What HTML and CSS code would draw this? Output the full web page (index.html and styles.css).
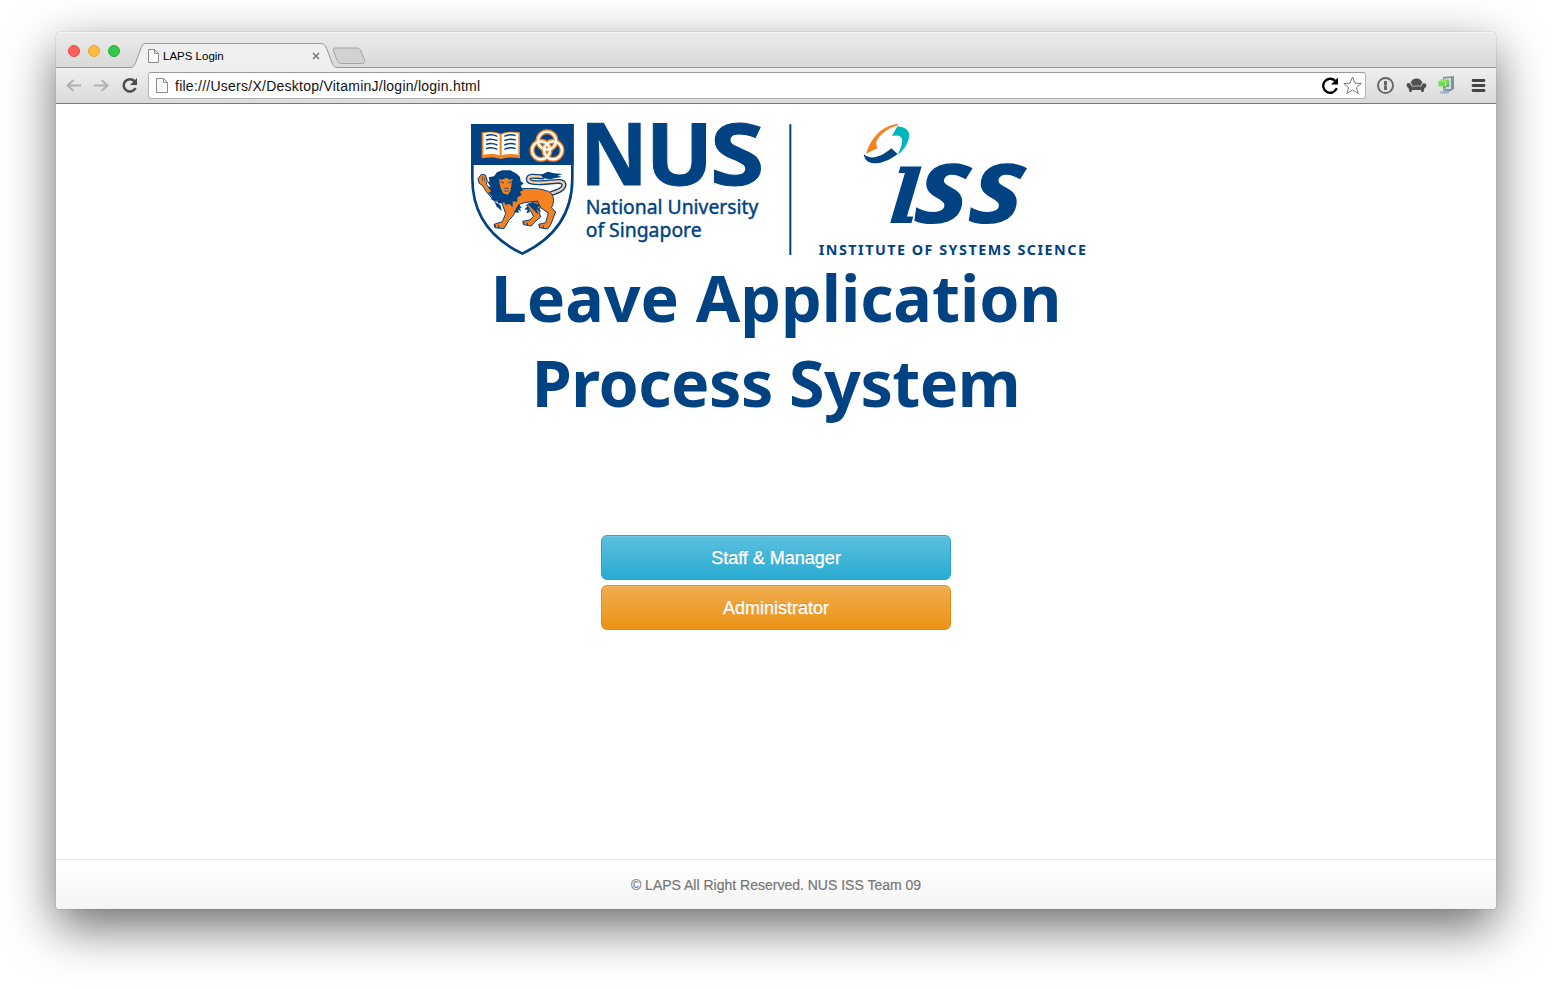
FILE: index.html
```html
<!DOCTYPE html>
<html lang="en">
<head>
<meta charset="utf-8">
<title>LAPS Login</title>
<link rel="stylesheet" href="styles.css">
</head>
<body>
<div class="window">
  <header class="tabstrip">
    <div class="lights"><i class="light red"></i><i class="light yellow"></i><i class="light green"></i></div>
    <div class="tab">
      <svg class="tab-shape" width="208" height="26" viewBox="0 0 208 26"><path d="M0 24.500C4 24.500 4.500 22 6 18.500L11 5C12.500 1.500 13.500.5 16 .5H191C194 .5 195 2 196.500 5L202 20C203.500 23.500 204.500 24.500 208 24.500V26H0Z" fill="#efefef"/><path d="M0 24.500C4 24.500 4.500 22 6 18.500L11 5C12.500 1.500 13.500.5 16 .5H191C194 .5 195 2 196.500 5L202 20C203.500 23.500 204.500 24.500 208 24.500" fill="none" stroke="#999"/></svg>
      <svg class="page-icon" width="11" height="14" viewBox="0 0 11 14"><path d="M.5.5H6.500L10.500 4.500V13.500H.5ZM6.500.5V4.500H10.500" fill="#fff" stroke="#8b8b8b"/></svg>
      <span class="tab-title">LAPS Login</span>
      <svg class="tab-close" width="8" height="8" viewBox="0 0 8 8"><path d="M1 1L7 7M7 1L1 7" stroke="#777" stroke-width="1.500"/></svg>
    </div>
    <svg class="new-tab" width="34" height="18" viewBox="0 0 34 18"><path d="M3 1H25C27 1 28 2 29 4L32.500 13C33 15.500 32.500 16.500 30 16.500H10C7 16.500 6 15.500 5 13L1.500 4C1 2 1 1 3 1Z" fill="#d2d2d2" stroke="#a4a4a4"/></svg>
  </header>
  <div class="toolbar">
    <svg class="nav-icons" width="76" height="20" viewBox="0 0 76 20"><g fill="none" stroke="#b1b1b1" stroke-width="2"><path d="M18 9.500H5M10.500 4L4.500 9.500L10.500 15M31 9.500H44M38.500 4L44.500 9.500L38.500 15"/></g><path d="M71.500 5.200A6.200 6.200 0 1 0 72.500 12" fill="none" stroke="#4c4c4c" stroke-width="2.500"/><path d="M74 2V9H67Z" fill="#4c4c4c"/></svg>
    <div class="address">
      <svg class="page-icon" width="12" height="15" viewBox="0 0 12 15"><path d="M.5.5H7.500L11.500 4.500V14.500H.5ZM7.500.5V4.500H11.500" fill="#f8f8f8" stroke="#8b8b8b"/></svg>
      <span class="url">file:///Users/X/Desktop/VitaminJ/login/login.html</span>
      <svg class="address-icons" width="42" height="20" viewBox="0 0 42 20"><path d="M13.200 4.800A7 7 0 1 0 14.800 12.200" fill="none" stroke="#000" stroke-width="2.300"/><path d="M16 1.500V8.500H9Z"/><path d="M30.500 1L33 7.200L39.300 7.500L34.500 11.500L36.300 17.500L30.500 14L24.800 17.500L26.500 11.500L21.800 7.500L28 7.200Z" fill="#fff" stroke="#777"/></svg>
    </div>
    <svg class="extensions" width="112" height="22" viewBox="0 0 112 22">
      <circle cx="10.500" cy="10.500" r="7.500" fill="#e4e4e4" stroke="#666" stroke-width="1.900"/>
      <path d="M9 6H12V9.500L11.300 10.500L12 11.500V15H9V11.500L9.700 10.500L9 9.500Z" fill="#666"/>
      <g fill="#505050"><path d="M35.500 8C36.500 4.800 39 3.500 41.500 3.500S46.500 4.800 47.500 8L46 11H37Z"/><path d="M32 8.500C34 7.500 36 8.500 36.200 11C39 10 44 10 46.800 11C47 8.500 49 7.500 51 9C52 11 51 12.500 49.500 13L48.500 17H46.500L46 15H37L36.500 17H34.500L33.500 13C32 12.500 31 10.500 32 8.500Z"/></g>
      <path d="M36 8L37.500 11.500Q41.500 10 45.500 11.500L47 8" fill="none" stroke="#c8c8c8" stroke-width=".8"/>
      <path d="M68 2L79 1V14L75 16.500H68Z" fill="#80949b"/><path d="M69 4.500L75 4V13H71" fill="none" stroke="#d3dee1" stroke-width="1.800"/>
      <path d="M63.500 6L66 4.500H73.500V9.500L70.500 11.500H63.500Z" fill="#70dc50"/><path d="M63.500 6H70.500V11.500" fill="none" stroke="#b1f49c"/>
      <path d="M69.500 13V19M65 17.500H74" stroke="#9ab6c5" stroke-width="2"/>
      <path d="M98 5.500H109M98 10.500H109M98 15.500H109" stroke="#444" stroke-width="2.800" stroke-linecap="round"/>
    </svg>
  </div>
  <main class="page">
    <svg class="logo" width="640" height="145" viewBox="0 0 1920 435" role="img" aria-label="National University of Singapore, Institute of Systems Science">
      <g>
        <path d="M37 31H337V190C337 294 286 369 187 416C88 369 37 294 37 190Z" fill="#fff" stroke="#004282" stroke-width="8"/>
        <path d="M33 27H341V150H33Z" fill="#004282"/>
        <path d="M65 52C86 49 107 49 122 56C138 49 159 49 180 52V130C159 126 138 126 122 132C107 126 86 126 65 130Z" fill="#f5821f"/>
        <path d="M70 54C90 51 107 52 119 59V121C105 116 87 116 70 119ZM125 59C138 52 155 51 175 54V119C158 116 140 116 125 121Z" fill="#fff"/>
        <path d="M78 62Q95 56 112 64M78 75Q95 69 112 77M78 88Q95 82 112 90M78 101Q95 95 112 103M133 64Q150 56 167 62M133 77Q150 69 167 75M133 90Q150 82 167 88M133 103Q150 95 167 101" fill="none" stroke="#004282" stroke-width="4.500"/>
        <g fill="none" stroke="#f5821f" stroke-width="15"><circle cx="261" cy="77" r="27"/><circle cx="243" cy="106" r="27"/><circle cx="279" cy="106" r="27"/></g>
        <g fill="none" stroke="#fff" stroke-width="7"><circle cx="261" cy="77" r="27"/><circle cx="243" cy="106" r="27"/><circle cx="279" cy="106" r="27"/></g>
        <path d="M272 236C297 229 313 221 312 208C309 193 281 201 247 203C219 204 203 202 205 191C207 180 226 184 252 186" fill="none" stroke="#004282" stroke-width="15"/>
        <path d="M272 236C297 229 313 221 312 208C309 193 281 201 247 203C219 204 203 202 205 191C207 180 226 184 252 186" fill="none" stroke="#f9cfa5" stroke-width="7"/>
        <path d="M242 180L263 170L282 175L307 177L293 182L306 186L286 189L270 193L250 190Z" fill="#004282"/>
        <g fill="#f5821f" stroke="#004282" stroke-width="3" stroke-linejoin="round">
          <path d="M200 270L223 260L245 262L237 289L242 306L224 321L214 333L191 329L188 319L210 315L220 304L214 291Z"/>
          <path d="M176 222C207 219 246 218 272 233C284 247 282 266 274 278L287 290L272 329L263 342L239 338L236 328L257 323L265 294L243 279L232 258L194 263L178 268L158 304L147 315L132 341L105 338L102 328L127 320L137 296L126 264L105 257C89 244 74 225 69 213L57 204L54 191L64 178L76 180L82 196L79 208L102 236L118 249L149 246Z"/>
        </g>
        <path d="M111 172L127 166L151 166L170 176L180 186L182 199L191 205L182 213L190 225L180 230L185 241L173 246L171 261L158 259L158 277L149 267L136 269L133 262L115 266L113 256L103 259L96 244L85 233L94 228L84 218L91 214L83 202L89 198L86 187L102 184Z" fill="#004282"/>
        <path d="M118 192L127 194L138 188L150 194L159 191L155 200L154 213L151 229L143 239L129 235L122 219L118 202Z" fill="#f5821f"/>
        <path d="M122 200L132 204M144 204L154 200M133 220H146M133 227Q139 231 146 227" fill="none" stroke="#004282" stroke-width="2.500"/>
        <path d="M67 184V197M74 187V199M93 252L100 246L110 274L124 286L120 270M176 268L184 279L177 278L182 287L172 282L176 292L162 291M203 268L220 264L240 271L232 276L242 290L229 280L233 297M204 274L195 283L205 283L200 293L210 290" fill="#004282" stroke="#004282" stroke-width="2"/>
        <path d="M106 330V338M116 330V339M192 322V329M202 323V332M239 331V338M250 332V340" stroke="#004282" stroke-width="3"/>
      </g>
      <g transform="translate(360)" class="logo-text">
        <text class="nus" y="210" font-size="257" font-weight="700"><tspan x="1" textLength="202" lengthAdjust="spacingAndGlyphs">N</tspan><tspan x="197" textLength="202" lengthAdjust="spacingAndGlyphs">U</tspan><tspan x="390" textLength="163" lengthAdjust="spacingAndGlyphs">S</tspan></text>
        <text x="17" y="296" font-size="57" font-weight="400" textLength="518" lengthAdjust="spacingAndGlyphs" class="name">National University</text>
        <text x="17" y="365" font-size="57" font-weight="400" textLength="348" lengthAdjust="spacingAndGlyphs" class="name">of Singapore</text>
        <path d="M631 28V420" stroke="#004282" stroke-width="6"/>
      </g>
      <g transform="translate(1050)" class="logo-text">
        <path d="M264 27C224 31 187 58 168 116L202 100L198 83C208 57 236 39 264 31Z" fill="#f5821f"/>
        <path d="M262 34C291 36 302 51 296 72C290 93 279 107 264 119C272 98 279 83 275 70C270 60 259 61 246 63Z" fill="#00b5bd"/>
        <path d="M161 117C178 133 207 132 244 100L263 117C224 148 167 160 161 117Z"/>
        <g transform="translate(0 325) skewX(-8)">
          <text x="226" y="0" class="serif-letter" font-size="326" font-weight="700" textLength="98" lengthAdjust="spacingAndGlyphs">ı</text>
          <text x="308" y="-2" font-size="322" font-weight="700" font-style="italic" textLength="327" lengthAdjust="spacingAndGlyphs">ss</text>
        </g>
        <text x="26" y="420" font-size="43" font-weight="700" textLength="802">INSTITUTE OF SYSTEMS SCIENCE</text>
      </g>
    </svg>
    <h1 class="heading"><span class="line-one">Leave Application</span><span class="line-two">Process System</span></h1>
    <nav class="actions"><a class="button info">Staff &amp; Manager</a><a class="button warning">Administrator</a></nav>
    <footer class="footer"><span>© LAPS All Right Reserved. NUS ISS Team 09</span></footer>
  </main>
</div>
</body>
</html>
```

FILE: styles.css
```css
* { box-sizing: border-box; }
body { margin: 0; padding: 32px 56px 80px; height: 989px; overflow: hidden; background: #fff; font-family: "Liberation Sans", Arial, sans-serif; }
svg { display: block; flex: none; }
.window { height: 877px; display: flex; flex-direction: column; border-radius: 5px 5px 4px 4px; overflow: hidden; box-shadow: 0 0 1px rgba(0,0,0,.6), 0 18px 50px rgba(0,0,0,.58); }
.tabstrip { height: 36px; flex: none; display: flex; background: linear-gradient(#ececec, #d9d9d9); border-bottom: 1px solid #999; box-shadow: inset 0 1px #f5f5f5; }
.lights { display: flex; gap: 8px; padding: 13px 0 0 12px; width: 74px; }
.light { width: 12px; height: 12px; border-radius: 50%; border: 1px solid; }
.red { background: #fc605b; border-color: #e44e4a; }
.yellow { background: #fdbc40; border-color: #e1a236; }
.green { background: #34c84a; border-color: #2bac3a; }
.tab { position: relative; width: 208px; height: 26px; margin-top: 11px; display: flex; align-items: center; padding-left: 18px; padding-right: 18px; }
.tab-shape { position: absolute; left: 0; top: 0; }
.tab .page-icon, .tab-title, .tab-close { position: relative; }
.tab-title { font-size: 11.500px; margin-left: 4px; flex: 1; white-space: nowrap; }
.new-tab { margin: 15px 0 0 -6px; }
.toolbar { height: 36px; flex: none; display: flex; align-items: center; background: linear-gradient(#efefef, #dadada); border-bottom: 1px solid #777; padding-left: 7px; }
.nav-icons { width: 76px; overflow: visible; }
.address { width: 1218px; height: 27px; margin-left: 9px; display: flex; align-items: center; padding-left: 7px; background: #fff; border: 1px solid #b5b5b5; border-top-color: #999; border-radius: 3px; }
.url { margin-left: 7px; flex: 1; font-size: 14px; letter-spacing: .25px; color: #111; }
.address-icons { margin-right: 1px; }
.extensions { margin-left: 9px; }
.page { flex: 1; display: flex; flex-direction: column; align-items: center; background: #fff; padding-top: 11px; }
.logo { margin-left: 8px; overflow: visible; }
.logo-text { fill: #004282; font-family: "Noto Sans", "Open Sans", sans-serif; }
.nus { stroke: #004282; stroke-width: 3; }
.name { stroke: #004282; stroke-width: 1.200; }
.serif-letter { font-family: "DejaVu Serif", serif; font-style: italic; }
.heading { margin: -5px 0 0; display: flex; flex-direction: column; align-items: center; color: #004282; font: 700 64.500px/85px "Noto Sans", "Open Sans", sans-serif; white-space: nowrap; }
.line-one { letter-spacing: -.05px; }
.line-two { letter-spacing: -.5px; }
.actions { width: 350px; margin-top: 110px; display: flex; flex-direction: column; gap: 5px; }
.button { height: 45px; display: flex; align-items: center; justify-content: center; padding-top: 2px; border: 1px solid; border-radius: 6px; color: #fff; font-size: 18px; -webkit-text-stroke: .3px #fff; text-shadow: 0 -1px rgba(0,0,0,.2); box-shadow: inset 0 1px rgba(255,255,255,.15); }
.info { background: linear-gradient(#5bc0de, #2aabd2); border-color: #28a4c9; }
.warning { background: linear-gradient(#f0ad4e, #eb9316); border-color: #e38d13; }
.footer { width: 100%; height: 50px; margin-top: auto; display: flex; align-items: center; justify-content: center; padding-top: 1px; border-top: 1px solid #e5e5e5; background: linear-gradient(#fff, #f5f5f5); color: #777; font-size: 14px; -webkit-text-stroke: .2px #777; }
```
